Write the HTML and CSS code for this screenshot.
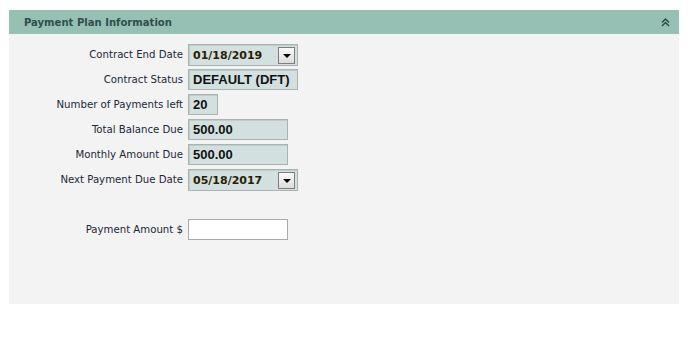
FILE: index.html
```html
<!DOCTYPE html>
<html lang="en">
<head>
  <meta charset="UTF-8" />
  <title>Payment Plan Information</title>
  <link rel="stylesheet" href="styles.css">
</head>
<body>
  <div class="panel">
    <div class="panel-head">
      <span class="panel-title">Payment Plan Information</span>
      <svg class="collapse" width="9" height="9" viewBox="0 0 9 9">
        <path d="M1 4.5 L4.5 1 L8 4.5 M1 8 L4.5 4.5 L8 8" fill="none" stroke="#2e4f4a" stroke-width="1.5"/>
      </svg>
    </div>
    <div class="panel-body">
      <div class="row">
        <label>Contract End Date</label>
        <div class="field date">01/18/2019<span class="drop"></span></div>
      </div>
      <div class="row">
        <label>Contract Status</label>
        <div class="field wide">DEFAULT (DFT)</div>
      </div>
      <div class="row">
        <label>Number of Payments left</label>
        <div class="field small">20</div>
      </div>
      <div class="row">
        <label>Total Balance Due</label>
        <div class="field amount">500.00</div>
      </div>
      <div class="row">
        <label>Monthly Amount Due</label>
        <div class="field amount">500.00</div>
      </div>
      <div class="row">
        <label>Next Payment Due Date</label>
        <div class="field date">05/18/2017<span class="drop"></span></div>
      </div>
      <div class="row spacer"></div>
      <div class="row">
        <label>Payment Amount $</label>
        <input type="text" class="entry" />
      </div>
    </div>
  </div>
</body>
</html>
```

FILE: styles.css
```css
body {
  margin: 0;
  background: #fff;
  font-family: 'DejaVu Sans Condensed', 'DejaVu Sans', sans-serif;
  font-stretch: condensed;
}
.panel {
  width: 670px;
  margin: 10px 0 0 9px;
  background: #f3f3f3;
}
.panel-head {
  height: 24px;
  background: #97c0b5;
  display: flex;
  align-items: center;
  justify-content: space-between;
  padding: 0 9px 0 15px;
}
.panel-title {
  font-size: 11.2px;
  font-weight: bold;
  color: #2f4f4c;
}
.collapse {
  display: block;
}
.panel-body {
  height: 260px;
  padding-top: 10px;
}
.row {
  display: grid;
  grid-template-columns: 174px auto;
  column-gap: 5px;
  align-items: start;
  height: 25px;
}
.row label {
  text-align: right;
  font-size: 11.3px;
  line-height: 21px;
  color: #1c2838;
}
.field {
  box-sizing: border-box;
  height: 21px;
  background: #d2e1e0;
  border: 1px solid #a8b3b2;
  box-shadow: inset 1px 1px 0 #bfcccb;
  padding: 0 4px;
  font-family: 'Liberation Sans', Arial, sans-serif;
  font-stretch: normal;
  font-weight: bold;
  font-size: 13px;
  color: #111;
  display: flex;
  align-items: center;
}
.date {
  width: 110px;
  height: 22px;
  justify-content: space-between;
  font-family: 'DejaVu Sans', Verdana, sans-serif;
  font-size: 11px;
  color: #2a1e00;
  padding-right: 2px;
}
.wide { width: 110px; }
.small { width: 30px; }
.amount { width: 100px; }
.drop {
  box-sizing: border-box;
  width: 17px;
  height: 17px;
  border: 1px solid #7d7d7d;
  background: linear-gradient(#fafafa, #dcdcdc);
  position: relative;
}
.drop::after {
  content: "";
  position: absolute;
  left: 4px;
  top: 6px;
  border-left: 4px solid transparent;
  border-right: 4px solid transparent;
  border-top: 4px solid #000;
}
.entry {
  box-sizing: border-box;
  width: 100px;
  height: 21px;
  margin: 0;
  border: 1px solid #aaa;
  background: #fff;
}
```
